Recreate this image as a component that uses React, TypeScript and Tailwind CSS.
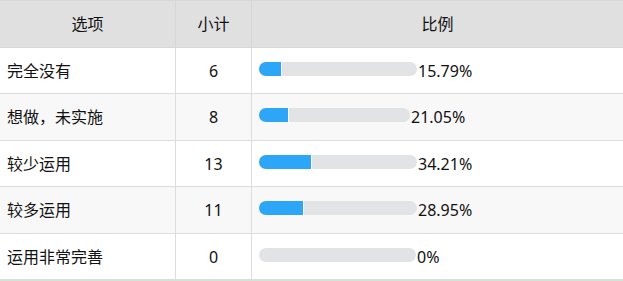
const rows = [
  { label: '完全没有', count: 6, pct: '15.79%', barW: 158, fillW: 23, bg: 'bg-white' },
  { label: '想做，未实施', count: 8, pct: '21.05%', barW: 151, fillW: 30, bg: 'bg-[#f8f8f8]' },
  { label: '较少运用', count: 13, pct: '34.21%', barW: 158, fillW: 53, bg: 'bg-white' },
  { label: '较多运用', count: 11, pct: '28.95%', barW: 158, fillW: 45, bg: 'bg-[#f8f8f8]' },
  { label: '运用非常完善', count: 0, pct: '0%', barW: 157, fillW: 0, bg: 'bg-white' },
];

export default function App() {
  return (
    <div
      className="w-[623px] h-[281px] overflow-hidden bg-white text-[16px] text-[#111]"
      style={{ fontFamily: '"Noto Sans", "Noto Sans CJK SC", sans-serif' }}
    >
      {/* header */}
      <div className="flex h-[48px] bg-[#e0e0e0] border-t border-b border-[#d6d6d6]">
        <div className="w-[176px] flex items-center justify-center border-r border-[#d6d6d6]">选项</div>
        <div className="w-[76px] flex items-center justify-center border-r border-[#d6d6d6]">小计</div>
        <div className="flex-1 flex items-center justify-center">比例</div>
      </div>

      {rows.map((r, i) => (
        <div
          key={r.label}
          className={`flex border-b border-[#dcdcdc] ${r.bg} ${i % 2 === 0 ? 'h-[46px]' : 'h-[47px]'}`}
        >
          <div className="w-[176px] flex items-center pl-[7px] border-r border-[#dcdcdc]">{r.label}</div>
          <div className="w-[76px] flex items-center justify-center border-r border-[#dcdcdc]">{r.count}</div>
          <div className="flex-1 flex items-center pl-[7px]">
            <div className="h-[14px] mb-[4px] rounded-full bg-[#e2e3e5] flex overflow-hidden" style={{ width: r.barW }}>
              {r.fillW > 0 && (
                <div className="h-full bg-[#2ea6f7] border-r border-white" style={{ width: r.fillW }} />
              )}
            </div>
            <span className="ml-px">{r.pct}</span>
          </div>
        </div>
      ))}
      <div className="h-px bg-[#cfe6cf]" />
    </div>
  );
}
